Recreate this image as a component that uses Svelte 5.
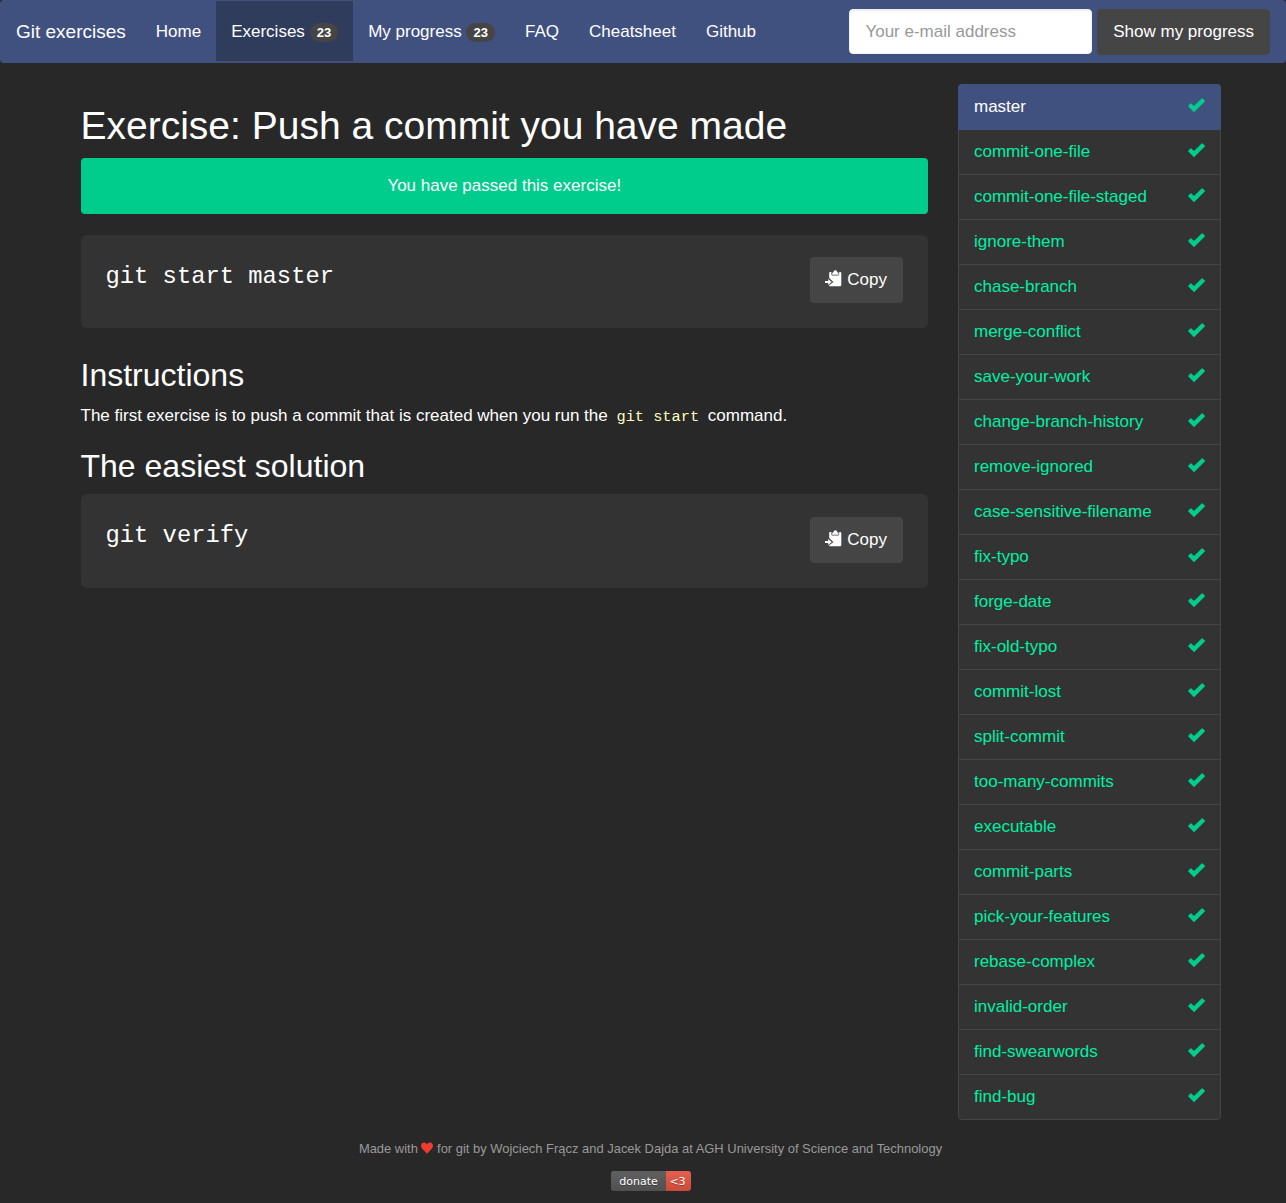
<script>
  const nav = [
    { label: 'Home' },
    { label: 'Exercises', count: 23, active: true },
    { label: 'My progress', count: 23 },
    { label: 'FAQ' },
    { label: 'Cheatsheet' },
    { label: 'Github' }
  ];
  const exercises = [
    'master', 'commit-one-file', 'commit-one-file-staged', 'ignore-them', 'chase-branch',
    'merge-conflict', 'save-your-work', 'change-branch-history', 'remove-ignored',
    'case-sensitive-filename', 'fix-typo', 'forge-date', 'fix-old-typo', 'commit-lost',
    'split-commit', 'too-many-commits', 'executable', 'commit-parts', 'pick-your-features',
    'rebase-complex', 'invalid-order', 'find-swearwords', 'find-bug'
  ];
</script>

{#snippet command(text)}
  <div class="well">
    <code class="cmd">{text}</code>
    <button class="btn copy">
      <svg width="17" height="17" viewBox="0 0 17 17" aria-hidden="true">
        <path fill="#fff" d="M5 2H6.4V4.2Q6.4 5.5 7.6 5.5H13Q14.2 5.5 14.2 4.2V2H15Q16.3 2 16.3 3.2V15Q16.3 16.2 15 16.2H4.6Q4 16.2 4 15.6L8.4 12L4.2 8V3Q4.2 2 5 2Z" />
        <path fill="#fff" d="M7.2 4.7V3.4Q7.2 2.4 8.4 2.2Q8.8 .2 10.4 .2Q12 .2 12.4 2.2Q13.6 2.4 13.6 3.4V4.7Z" />
        <path fill="#fff" d="M0 11H3.2V8.9L6.7 12L3.2 15.1V13H0Z" />
      </svg>
      <span>Copy</span>
    </button>
  </div>
{/snippet}

<nav class="navbar">
  <a class="brand" href="#home">Git exercises</a>
  <ul class="links">
    {#each nav as item}
      <li>
        <a href="#nav" class:active={item.active}>
          {item.label}{#if item.count}<span class="badge">{item.count}</span>{/if}
        </a>
      </li>
    {/each}
  </ul>
  <form class="search">
    <input type="text" placeholder="Your e-mail address" />
    <button type="button" class="btn">Show my progress</button>
  </form>
</nav>

<div class="container">
  <main>
    <h1>Exercise: Push a commit you have made</h1>
    <div class="alert">You have passed this exercise!</div>
    {@render command('git start master')}
    <h2 class="instructions">Instructions</h2>
    <p>The first exercise is to push a commit that is created when you run the <code>git start</code> command.</p>
    <h2 class="solution">The easiest solution</h2>
    {@render command('git verify')}
  </main>
  <aside>
    {#each exercises as name, i}
      <a href="#exercise" class="item" class:current={i === 0}>
        <span>{name}</span>
        <svg width="17" height="15" viewBox="0 0 17 15" aria-hidden="true">
          <path fill="#00cc8c" d="M.3 7.7L2.4 5.5Q2.9 5.1 3.4 5.5L6 7.9L13.6 .4Q14.1 0 14.6 .4L16.8 2.5Q17.2 3 16.8 3.5L6.5 13.7Q6 14.1 5.5 13.7L.3 8.6Q0 8.1 .3 7.7Z" />
        </svg>
      </a>
    {/each}
  </aside>
</div>

<footer>
  <div class="credits">
    Made with
    <svg width="12" height="12" viewBox="0 0 12 12" aria-hidden="true">
      <path fill="#f13a30" d="M6 11.7L1 6.4C-1 4 .3 .4 3.1 .4C4.5 .4 5.5 1.2 6 2.3C6.5 1.2 7.5 .4 8.9 .4C11.7 .4 13 4 11 6.4Z" />
    </svg>
    for git by Wojciech Frącz and Jacek Dajda at AGH University of Science and Technology
  </div>
  <div class="donate"><span class="label">donate</span><span class="love">&lt;3</span></div>
</footer>

<style>
  :global(body) {
    margin: 0;
    background: #282828;
    color: #fff;
    font: 17px/24px "Liberation Sans", Arial, sans-serif;
  }
  * { box-sizing: border-box; }
  a { color: inherit; text-decoration: none; }
  .navbar {
    display: flex;
    height: 63px;
    padding: 1px 16px;
    background: #405180;
    border-radius: 4px;
  }
  .brand { font-size: 19px; line-height: 62px; margin-right: 15px; width: 109.8px; white-space: nowrap; }
  .links { display: flex; list-style: none; margin: 0; padding: 0; }
  .links a { display: flex; align-items: center; height: 60px; padding: 2px 15px 0; white-space: nowrap; }
  .links a.active { background: #303c5b; }
  .badge {
    margin: 1px 0 0 4.8px;
    width: 28.5px;
    height: 19px;
    border-radius: 10px;
    background: #464545;
    font-size: 13px;
    font-weight: bold;
    line-height: 19px;
    text-align: center;
  }
  .search { display: flex; gap: 5px; margin: 0 0 0 auto; padding-top: 8px; }
  input {
    width: 243px;
    height: 45px;
    padding: 0 15.2px;
    border: 1px solid #f1f1f1;
    border-radius: 4px;
    background: #fff;
    box-shadow: inset 0 1px 1px rgba(0, 0, 0, .075);
    font: inherit;
  }
  input::placeholder { color: #999; opacity: 1; }
  .btn {
    height: 46px;
    padding: 0 16px;
    border: 0;
    border-radius: 4px;
    background: #464545;
    color: #fff;
    font: inherit;
    white-space: nowrap;
  }
  .container { display: flex; gap: 30px; padding: 21px 65px 0 80.5px; }
  main { width: 847.5px; }
  h1, h2, p { margin: 0; font-weight: normal; }
  h1 { margin-top: 20px; font-size: 39px; line-height: 43px; white-space: nowrap; }
  .alert {
    height: 56px;
    margin: 11px 0 21px;
    border-radius: 4px;
    background: #00cc8c;
    line-height: 55px;
    text-align: center;
  }
  .well {
    display: flex;
    justify-content: space-between;
    height: 93px;
    padding: 22px 25px;
    border-radius: 6px;
    background: #333;
  }
  .solution + .well { height: 94px; }
  .solution + .well .copy { margin-top: 1px; }
  .cmd { font: 23.8px/40px "Liberation Mono", monospace; }
  .copy { display: flex; align-items: center; gap: 5.3px; width: 93px; padding: 0 0 0 15px; }
  .copy svg { margin-top: -3px; }
  h2 { font-size: 32px; line-height: 35px; }
  .instructions { margin: 30px 0 10px; }
  p { height: 24px; line-height: 26px; white-space: nowrap; }
  p code { padding: 2px 4px; color: #ffffbf; font: 15.3px "Liberation Mono", monospace; }
  .solution { margin: 22px 0 10px; }
  aside { width: 263px; }
  .item {
    display: flex;
    justify-content: space-between;
    height: 45px;
    padding: 10px 15px 0;
    border: 1px solid #464545;
    border-bottom: 0;
    background: #333;
    color: #00efa3;
  }
  .item:first-child { border-radius: 4px 4px 0 0; }
  .item:last-child { height: 46px; border-bottom: 1px solid #464545; border-radius: 0 0 4px 4px; }
  .item svg { margin-top: 3px; }
  .item.current { height: 46px; margin-bottom: -1px; background: #405180; border-color: #405180; color: #fff; position: relative; }
  footer { display: flex; flex-direction: column; align-items: center; padding: 19px 0 0 15px; }
  .credits { color: #999; font-size: 12.95px; line-height: 20px; white-space: nowrap; }
  .credits svg { vertical-align: -.6px; }
  .donate {
    display: flex;
    width: 80px;
    height: 20px;
    margin-top: 12px;
    border-radius: 3px;
    overflow: hidden;
    font: 11px/21px "DejaVu Sans", sans-serif;
    text-align: center;
    text-shadow: 0 1px rgba(1, 1, 1, .3);
  }
  .label { width: 55px; padding-left: 1px; background: linear-gradient(#606060, #505050); }
  .love { width: 25px; padding-right: 1px; background: linear-gradient(#e46050, #cc4a37); }
</style>
